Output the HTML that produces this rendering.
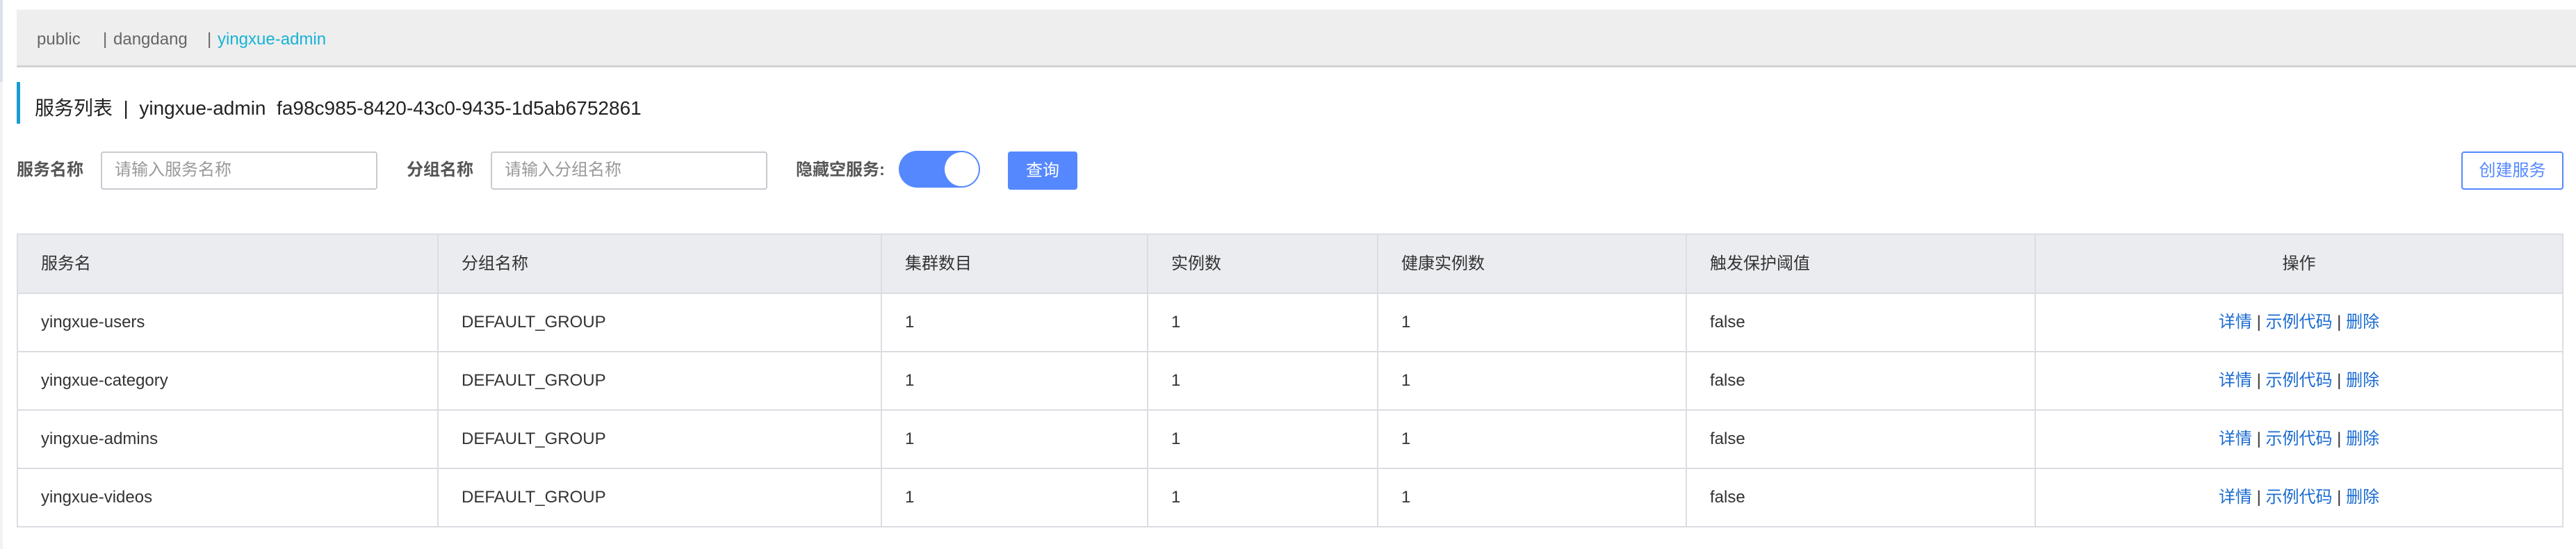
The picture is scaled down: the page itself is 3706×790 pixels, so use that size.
<!DOCTYPE html>
<html><head><meta charset="utf-8"><style>
*{box-sizing:border-box;margin:0;padding:0}
body{width:3706px;height:790px;background:#fff;position:relative;overflow:hidden;font-family:"Liberation Sans","Noto Sans CJK SC",sans-serif;color:#333}
.abs{position:absolute}
.strip{left:0;top:0;width:4px;height:118px;background:#dde1e8}
.strip2{left:0;top:118px;width:4px;height:672px;background:#f0f2f5}
.nav{left:24px;top:14px;width:3682px;height:83px;background:#eee;border-bottom:3px solid #d2d2d2;font-size:24px;color:#666}
.nav span{position:absolute;top:29px;line-height:28px}
.tbar{left:24px;top:118px;width:5px;height:60px;background:#1a9cd0}
.title{left:50px;top:138px;font-size:28px;line-height:36px;color:#222;white-space:pre}
.lbl{font-size:24px;font-weight:bold;color:#555;line-height:30px;top:230px}
.inp{top:218px;height:55px;border:2px solid #c8cad0;border-radius:4px;font-size:24px;color:#999;padding:0 0 0 18px;line-height:50px}
.tog{left:1293px;top:217px;width:117px;height:53px;border-radius:27px;background:#5588ff}
.knob{position:absolute;right:2px;top:2px;width:49px;height:49px;border-radius:50%;background:#fff}
.btn{left:1450px;top:218px;width:100px;height:55px;border-radius:4px;background:#5588ff;color:#fff;font-size:24px;text-align:center;line-height:55px}
.cbtn{left:3541px;top:218px;width:147px;height:55px;border-radius:4px;border:2px solid #5588ff;color:#5588ff;font-size:24px;text-align:center;line-height:51px}
table{position:absolute;left:24px;top:336px;border-collapse:collapse;font-size:24px;table-layout:fixed}
td,th{border:2px solid #dcdde2;padding:0 0 0 33px;text-align:left;font-weight:normal;height:84px;line-height:30px;vertical-align:middle}
th{background:#ebecf0;color:#333;height:85px}
td{color:#333}
.op{text-align:center;padding:0}
.op a{color:#1a6bd0;text-decoration:none}
</style></head><body>
<div class="abs strip"></div><div class="abs strip2"></div>
<div class="abs nav">
<span style="left:29px">public</span>
<span style="left:124px">|</span><span style="left:139px">dangdang</span>
<span style="left:274px">|</span><span style="left:289px;color:#17b3d6">yingxue-admin</span>
</div>
<div class="abs tbar"></div>
<div class="abs title">服务列表  |  yingxue-admin  fa98c985-8420-43c0-9435-1d5ab6752861</div>
<div class="abs lbl" style="left:24px">服务名称</div>
<div class="abs inp" style="left:145px;width:398px">请输入服务名称</div>
<div class="abs lbl" style="left:585px">分组名称</div>
<div class="abs inp" style="left:706px;width:398px">请输入分组名称</div>
<div class="abs lbl" style="left:1145px">隐藏空服务:</div>
<div class="abs tog"><div class="knob"></div></div>
<div class="abs btn">查询</div>
<div class="abs cbtn">创建服务</div>
<table>
<colgroup><col style="width:605px"><col style="width:638px"><col style="width:383px"><col style="width:331px"><col style="width:444px"><col style="width:502px"><col style="width:759px"></colgroup>
<tr><th>服务名</th><th>分组名称</th><th>集群数目</th><th>实例数</th><th>健康实例数</th><th>触发保护阈值</th><th class="op">操作</th></tr>
<tr><td>yingxue-users</td><td>DEFAULT_GROUP</td><td>1</td><td>1</td><td>1</td><td>false</td><td class="op"><a>详情</a> | <a>示例代码</a> | <a>删除</a></td></tr>
<tr><td>yingxue-category</td><td>DEFAULT_GROUP</td><td>1</td><td>1</td><td>1</td><td>false</td><td class="op"><a>详情</a> | <a>示例代码</a> | <a>删除</a></td></tr>
<tr><td>yingxue-admins</td><td>DEFAULT_GROUP</td><td>1</td><td>1</td><td>1</td><td>false</td><td class="op"><a>详情</a> | <a>示例代码</a> | <a>删除</a></td></tr>
<tr><td>yingxue-videos</td><td>DEFAULT_GROUP</td><td>1</td><td>1</td><td>1</td><td>false</td><td class="op"><a>详情</a> | <a>示例代码</a> | <a>删除</a></td></tr>
</table>
</body></html>
